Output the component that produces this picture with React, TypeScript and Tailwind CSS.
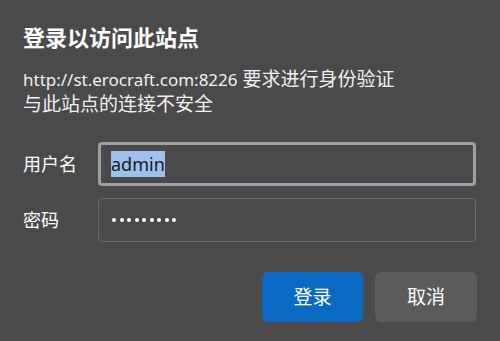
import React from "react";

const font = { fontFamily: '"Noto Sans", "Noto Sans CJK SC", sans-serif' };

export default function App() {
  return (
    <div
      className="w-[500px] h-[341px] bg-[#4a4a4a] pl-[23px] pr-[23px] pt-[22px] text-white overflow-hidden"
      style={font}
    >
      <h1 className="text-[22px] leading-[30px] font-bold">登录以访问此站点</h1>
      <div className="mt-[15px] text-[19px] leading-[25px] text-[#f0f0f0]">
        <div>
          <span className="text-[17px]">http://st.erocraft.com:8226</span> 要求进行身份验证
        </div>
        <div>与此站点的连接不安全</div>
      </div>
      <div className="mt-[25px] flex flex-col gap-[12px]">
        <div className="flex items-center">
          <div className="w-[75px] text-[18px]">用户名</div>
          <div className="w-[378px] h-[44px] border-[3px] border-[#9ca0a5] rounded-[4px] flex items-center pl-[10px]">
            <span className="bg-[#9ec1ee] text-[#1a1a1a] text-[18px] leading-[26px]">admin</span>
          </div>
        </div>
        <div className="flex items-center">
          <div className="w-[75px] text-[18px]">密码</div>
          <div className="w-[378px] h-[44px] border border-[#6a6a6a] rounded-[4px] flex items-center pl-[13px] gap-[3.5px]">
            {Array.from({ length: 9 }).map((_, i) => (
              <span key={i} className="w-[4px] h-[4px] rounded-full bg-white" />
            ))}
          </div>
        </div>
      </div>
      <div className="mt-[30px] flex justify-end gap-[12px]">
        <button className="w-[101px] h-[50px] rounded-[6px] bg-[#0a69c2] text-white text-[19px]">登录</button>
        <button className="w-[102px] h-[50px] rounded-[6px] bg-[#5b5b5b] text-white text-[19px]">取消</button>
      </div>
    </div>
  );
}
